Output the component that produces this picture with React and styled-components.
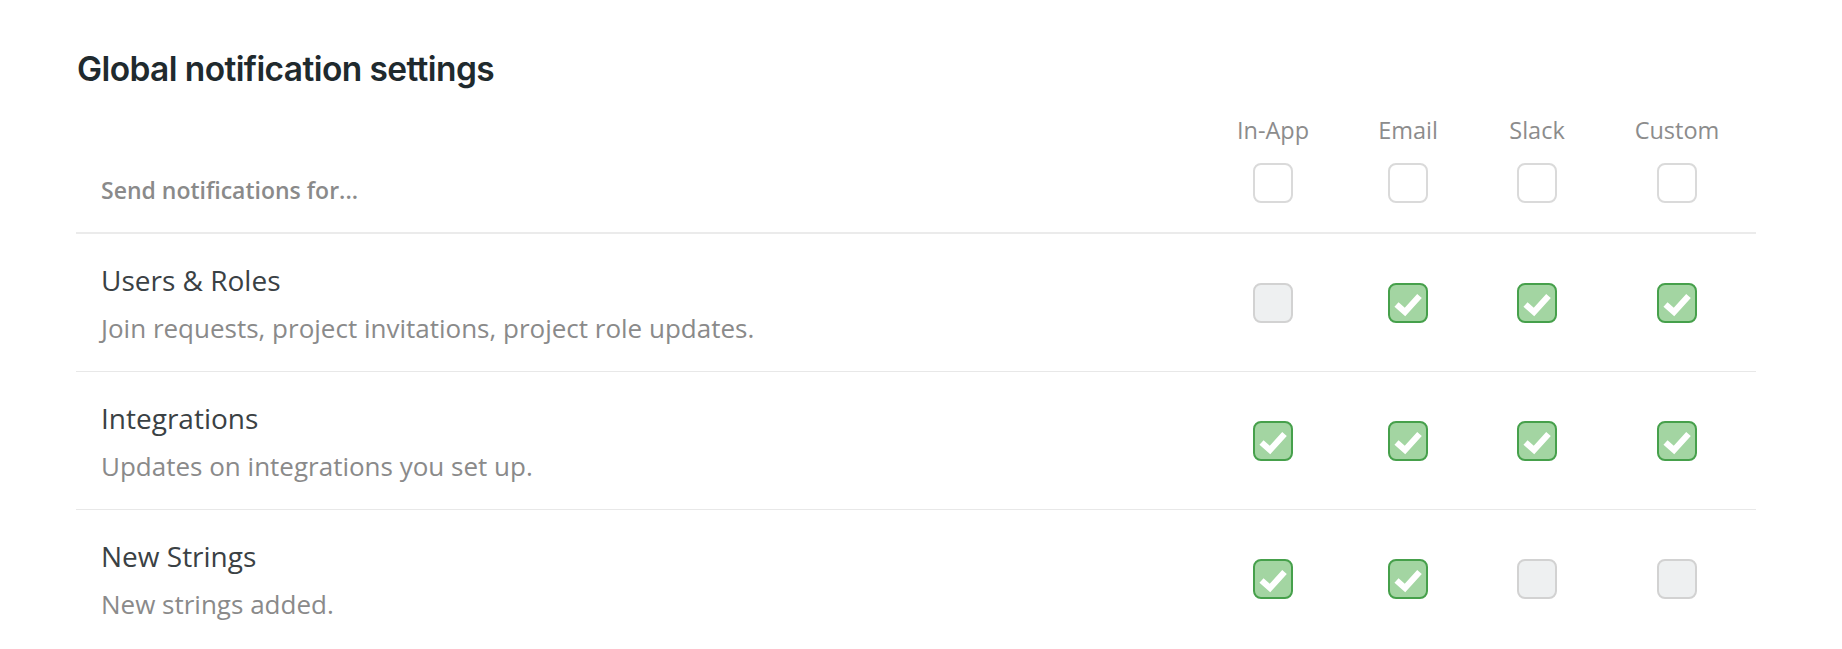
import React from "react";
import styled, { createGlobalStyle } from "styled-components";

const Global = createGlobalStyle`
  html, body { margin: 0; padding: 0; background: #ffffff; }
  body { font-family: "Open Sans", "Noto Sans", sans-serif; }
`;

const Page = styled.div`
  padding: 49px 86px 0 76px;
`;

const Title = styled.h2`
  margin: 0 0 0 1px;
  font-family: "Inter", "Lato", sans-serif;
  font-weight: 600;
  font-size: 33.5px;
  line-height: 40px;
  letter-spacing: -0.6px;
  color: #1f2a2e;
`;

const Grid = styled.div`
  display: grid;
  grid-template-columns: 1fr 134px 136px 122px 158px;
  align-items: center;
`;

const HeaderGrid = styled(Grid)`
  margin-top: 27px;
  padding-bottom: 29px;
  border-bottom: 2px solid #ebebeb;
  align-items: end;
`;

const SendLabel = styled.div`
  padding-left: 25px;
  font-size: 23px;
  line-height: 26px;
  font-weight: 600;
  color: #8a8a8a;
`;

const ColHead = styled.div`
  display: flex;
  flex-direction: column;
  align-items: center;
  gap: 19px;
`;

const ColLabel = styled.div`
  font-size: 23.5px;
  line-height: 28px;
  font-weight: 500;
  color: #8c8c8c;
`;

const Row = styled(Grid)`
  min-height: 137px;
  border-bottom: 1px solid #e8e8e8;
  &:last-child { border-bottom: none; }
`;

const TextBlock = styled.div`
  padding-left: 25px;
  display: flex;
  flex-direction: column;
  gap: 14px;
`;

const RowTitle = styled.div`
  font-size: 28px;
  line-height: 36px;
  color: #3a4144;
`;

const RowDesc = styled.div`
  font-size: 26px;
  line-height: 32px;
  color: #8a8a8a;
`;

const Cell = styled.div`
  display: flex;
  justify-content: center;
`;

const Box = styled.div`
  box-sizing: border-box;
  width: 40px;
  height: 40px;
  border-radius: 8px;
  border: 2px solid ${(p) => (p.$checked ? "#46a04b" : p.$header ? "#dadada" : "#d2d2d2")};
  background: ${(p) => (p.$checked ? "#a3d5a2" : p.$header ? "#ffffff" : "#eef0f1")};
  display: flex;
  align-items: center;
  justify-content: center;
`;

const Check = () => (
  <svg width="36" height="36" viewBox="0 0 36 36">
    <path d="M6.5 19.5 L15 27 L29.5 11" fill="none" stroke="#ffffff" strokeWidth="6.2" strokeLinejoin="miter" />
  </svg>
);

const Checkbox = ({ checked, header }) => (
  <Box $checked={checked} $header={header}>{checked && <Check />}</Box>
);

const columns = ["In-App", "Email", "Slack", "Custom"];

const rows = [
  { title: "Users & Roles", desc: "Join requests, project invitations, project role updates.", values: [false, true, true, true] },
  { title: "Integrations", desc: "Updates on integrations you set up.", values: [true, true, true, true] },
  { title: "New Strings", desc: "New strings added.", values: [true, true, false, false] },
];

export default function App() {
  return (
    <Page>
      <Global />
      <Title>Global notification settings</Title>
      <HeaderGrid>
        <SendLabel>Send notifications for...</SendLabel>
        {columns.map((c) => (
          <ColHead key={c}>
            <ColLabel>{c}</ColLabel>
            <Checkbox header />
          </ColHead>
        ))}
      </HeaderGrid>
      {rows.map((r) => (
        <Row key={r.title}>
          <TextBlock>
            <RowTitle>{r.title}</RowTitle>
            <RowDesc>{r.desc}</RowDesc>
          </TextBlock>
          {r.values.map((v, i) => (
            <Cell key={i}>
              <Checkbox checked={v} />
            </Cell>
          ))}
        </Row>
      ))}
    </Page>
  );
}
